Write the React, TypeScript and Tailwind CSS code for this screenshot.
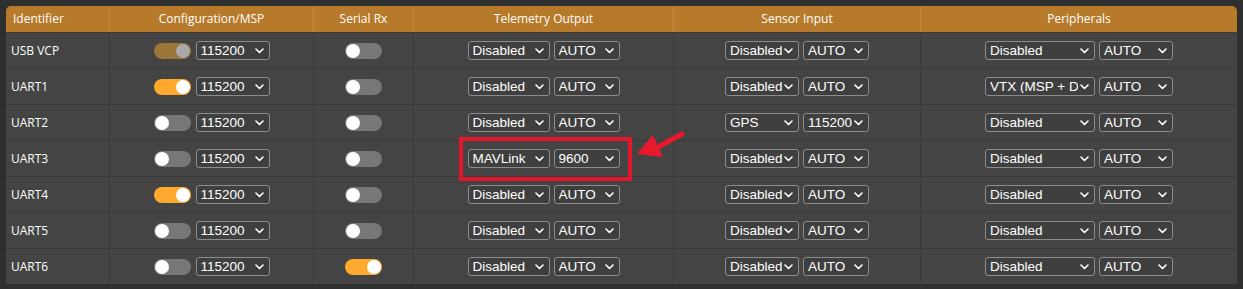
import React from "react";

type Row = {
  id: string;
  msp: "on" | "off" | "locked";
  rx: boolean;
  tele: [string, string];
  sensor: [string, string];
  periph: [string, string];
  mark?: boolean;
};

const rows: Row[] = [
  { id: "USB VCP", msp: "locked", rx: false, tele: ["Disabled", "AUTO"], sensor: ["Disabled", "AUTO"], periph: ["Disabled", "AUTO"] },
  { id: "UART1", msp: "on", rx: false, tele: ["Disabled", "AUTO"], sensor: ["Disabled", "AUTO"], periph: ["VTX (MSP + D", "AUTO"] },
  { id: "UART2", msp: "off", rx: false, tele: ["Disabled", "AUTO"], sensor: ["GPS", "115200"], periph: ["Disabled", "AUTO"] },
  { id: "UART3", msp: "off", rx: false, tele: ["MAVLink", "9600"], sensor: ["Disabled", "AUTO"], periph: ["Disabled", "AUTO"], mark: true },
  { id: "UART4", msp: "on", rx: false, tele: ["Disabled", "AUTO"], sensor: ["Disabled", "AUTO"], periph: ["Disabled", "AUTO"] },
  { id: "UART5", msp: "off", rx: false, tele: ["Disabled", "AUTO"], sensor: ["Disabled", "AUTO"], periph: ["Disabled", "AUTO"] },
  { id: "UART6", msp: "off", rx: true, tele: ["Disabled", "AUTO"], sensor: ["Disabled", "AUTO"], periph: ["Disabled", "AUTO"] },
];

function Toggle({ state }: { state: "on" | "off" | "locked" }) {
  const track =
    state === "on" ? "bg-[#ffaa2e] justify-end" : state === "locked" ? "bg-[#9b7638] justify-end" : "bg-[#777777] justify-start";
  const knob = state === "locked" ? "bg-[#a9a9a9]" : "bg-white";
  return (
    <div className={`flex items-center w-[37px] h-[16px] rounded-full px-[1px] ${track}`}>
      <div className={`w-[14px] h-[14px] rounded-full ${knob}`} />
    </div>
  );
}

function Select({ value, w }: { value: string; w: string }) {
  return (
    <div
      className={`flex items-center justify-between h-[19px] ${w} border border-[#8c8c8c] rounded-[3px] bg-[#3f3f3f] pl-[4px] pr-[5px] text-[13.5px] leading-none text-white overflow-hidden`}
      style={{ fontFamily: '"Liberation Sans", Arial, sans-serif' }}
    >
      <span className="whitespace-nowrap overflow-hidden">{value}</span>
      <svg width="9" height="6" viewBox="0 0 9 6" className="shrink-0 ml-[2px]">
        <path d="M1 1l3.5 3.5L8 1" fill="none" stroke="white" strokeWidth="1.6" strokeLinecap="round" strokeLinejoin="round" />
      </svg>
    </div>
  );
}

const cols = "grid grid-cols-[103px_204px_100px_260px_247px_317px]";

export default function App() {
  return (
    <div className="relative w-[1243px] h-[289px] bg-[#2e302f] p-[6px]" style={{ fontFamily: '"Open Sans", "Noto Sans", sans-serif' }}>
      <div className="w-[1231px] rounded-t-[5px] overflow-hidden">
        {/* header */}
        <div className={`${cols} h-[26px] bg-[#b67a2a] text-white text-[12px]`}>
          <div className="flex items-center pl-[7px]">Identifier</div>
          {["Configuration/MSP", "Serial Rx", "Telemetry Output", "Sensor Input", "Peripherals"].map((h) => (
            <div key={h} className="flex items-center justify-center border-l border-[#c08a45]">
              {h}
            </div>
          ))}
        </div>

        {rows.map((r) => (
          <div key={r.id} className={`${cols} h-[36px] bg-[#444444] border-t border-[#3a3a3a] text-white text-[12px]`}>
            <div className="flex items-center pl-[5px]">{r.id}</div>
            <div className="flex items-center justify-center gap-[5px] border-l border-[#3a3a3a]">
              <Toggle state={r.msp} />
              <Select value="115200" w="w-[74px]" />
            </div>
            <div className="flex items-center justify-center border-l border-[#3a3a3a]">
              <Toggle state={r.rx ? "on" : "off"} />
            </div>
            <div className="relative flex items-center justify-center gap-[4px] border-l border-[#3a3a3a]">
              <Select value={r.tele[0]} w="w-[82px]" />
              <Select value={r.tele[1]} w="w-[66px]" />
              {r.mark && <div className="absolute left-[45px] top-[-4px] w-[173px] h-[44px] border-[4px] border-[#e3162c]" />}
            </div>
            <div className="flex items-center justify-center gap-[4px] border-l border-[#3a3a3a]">
              <Select value={r.sensor[0]} w="w-[74px]" />
              <Select value={r.sensor[1]} w="w-[66px]" />
            </div>
            <div className="flex items-center justify-center gap-[4px] border-l border-[#3a3a3a]">
              <Select value={r.periph[0]} w="w-[110px]" />
              <Select value={r.periph[1]} w="w-[74px]" />
            </div>
          </div>
        ))}
      </div>

      {/* arrow */}
      <svg className="absolute left-[630px] top-[125px]" width="60" height="40" viewBox="0 0 60 40">
        <path d="M52 9L30 21" stroke="#e8182d" strokeWidth="5" strokeLinecap="round" />
        <polygon points="7,29 23,10 33,32" fill="#e8182d" />
      </svg>
    </div>
  );
}
